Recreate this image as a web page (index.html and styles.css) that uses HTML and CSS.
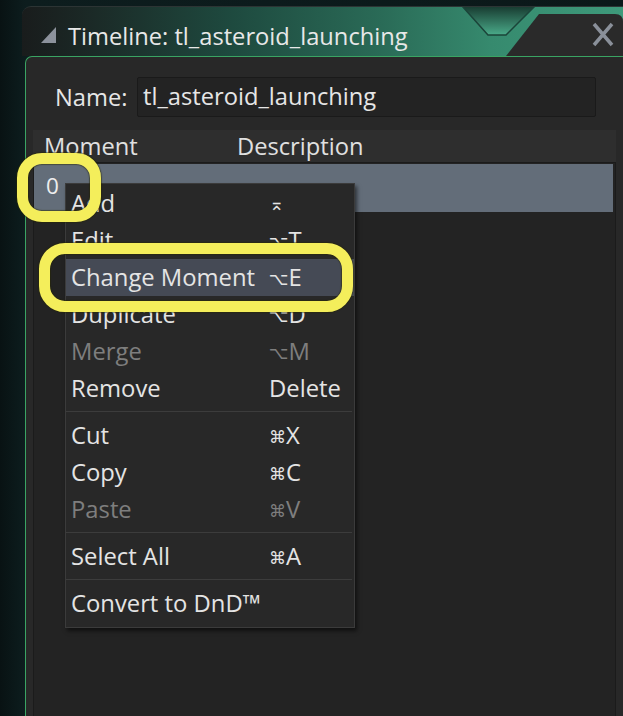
FILE: index.html
```html
<!DOCTYPE html>
<html>
<head>
<meta charset="utf-8">
<link rel="stylesheet" href="styles.css">
</head>
<body>
<div class="desktop">
  <div class="window">
    <div class="titlebar">
      <svg class="tri" width="15" height="16" viewBox="0 0 15 16"><polygon points="0,16 15,16 15,0" fill="#8c929c"/></svg>
      <div class="title">Timeline: tl_asteroid_launching</div>
      <div class="spacer"></div>
      <svg class="deco" width="170" height="50" viewBox="0 0 170 50">
        <defs>
          <linearGradient id="ng" x1="0" y1="0" x2="0" y2="1">
            <stop offset="0" stop-color="#17392f"/>
            <stop offset="1" stop-color="#4aaa89"/>
          </linearGradient>
        </defs>
        <polygon points="9,0 82,0 53,29 35,29" fill="url(#ng)" stroke="#1b4439" stroke-width="1.5"/>
        <path d="M53,50 L86,8 L162,8 Q170,8 170,16 L170,50 Z" fill="#2a2a2a"/>
        <path d="M141,18 L159,39 M159,18 L141,39" stroke="#8a909a" stroke-width="3.5"/>
      </svg>
    </div>
    <div class="panel">
      <div class="name-row">
        <span class="label">Name:</span>
        <div class="input">tl_asteroid_launching</div>
      </div>
      <div class="list">
        <div class="list-head">
          <span class="col-moment">Moment</span>
          <span class="col-desc">Description</span>
        </div>
        <div class="rows">
          <div class="row selected"><span class="moment">0</span></div>
        </div>
      </div>
    </div>
  </div>

  <div class="menu">
    <div class="item"><span>Add</span><span class="sc"><span class="mod up">⌅</span></span></div>
    <div class="item"><span>Edit</span><span class="sc"><span class="mod">⌥</span>T</span></div>
    <div class="item hl"><span>Change Moment</span><span class="sc"><span class="mod">⌥</span>E</span></div>
    <div class="item"><span>Duplicate</span><span class="sc"><span class="mod">⌥</span>D</span></div>
    <div class="item dis"><span>Merge</span><span class="sc"><span class="mod">⌥</span>M</span></div>
    <div class="item"><span>Remove</span><span class="sc">Delete</span></div>
    <div class="sep"></div>
    <div class="item"><span>Cut</span><span class="sc"><span class="mod">⌘</span>X</span></div>
    <div class="item"><span>Copy</span><span class="sc"><span class="mod">⌘</span>C</span></div>
    <div class="item dis"><span>Paste</span><span class="sc"><span class="mod">⌘</span>V</span></div>
    <div class="sep"></div>
    <div class="item"><span>Select All</span><span class="sc"><span class="mod">⌘</span>A</span></div>
    <div class="sep"></div>
    <div class="item"><span>Convert to DnD™</span><span class="sc"></span></div>
  </div>

  <div class="ring ring-zero"></div>
  <div class="ring ring-change"></div>
</div>
</body>
</html>
```
FILE: styles.css
```css
html, body {
  margin: 0;
  padding: 0;
}
body {
  width: 623px;
  height: 716px;
  overflow: hidden;
  background: #0b1718;
  font-family: "Open Sans", "Noto Sans", sans-serif;
  color: #e4e4e4;
}
.desktop {
  position: relative;
  width: 623px;
  height: 716px;
  background: linear-gradient(90deg, #081213 0%, #0d1d1e 4%, #0b1819 100%);
}
.window {
  margin-left: 22px;
  padding-top: 6px;
  height: 710px;
  display: flex;
  flex-direction: column;
}
.titlebar {
  height: 50px;
  flex: none;
  display: flex;
  align-items: center;
  border-top-left-radius: 9px;
  border-top: 1px solid #2c3434;
  box-sizing: border-box;
  background: linear-gradient(90deg, #191c1c 0%, #1b2a27 12%, #1e4a3f 35%, #2a6b57 60%, #368a6e 78%, #3e9a7b 100%);
  overflow: hidden;
}
.tri {
  margin-left: 19px;
  margin-top: 7px;
  flex: none;
}
.title {
  margin-left: 12px;
  font-size: 23.7px;
  color: #e8e8e8;
  white-space: nowrap;
  margin-top: 8px;
}
.spacer { flex: 1; }
.deco {
  flex: none;
  align-self: flex-start;
  margin-top: -1px;
}
.panel {
  flex: 1;
  margin-left: 3px;
  border-top: 1px solid #3aa463;
  border-left: 1px solid #3aa463;
  border-top-left-radius: 7px;
  background: #282828;
  display: flex;
  flex-direction: column;
}
.name-row {
  display: flex;
  align-items: center;
  padding: 20px 27px 0 29px;
  height: 40px;
}
.label {
  font-size: 23.7px;
  width: 82px;
  flex: none;
  color: #e6e6e6;
}
.input {
  flex: 1;
  height: 40px;
  box-sizing: border-box;
  background: #232323;
  border: 1px solid #1a1a1a;
  border-radius: 2px;
  font-size: 23.7px;
  line-height: 36px;
  padding-left: 5px;
  color: #e6e6e6;
}
.list {
  margin: 13px 7px 0 7px;
  flex: 1;
  display: flex;
  flex-direction: column;
}
.list-head {
  height: 32px;
  background: #2e2e2e;
  display: flex;
  align-items: center;
  font-size: 23.7px;
  color: #e0e0e0;
  line-height: 32px;
}
.col-moment { margin-left: 11px; width: 193px; }
.rows {
  flex: 1;
  background: #232323;
  border-top: 1px solid #1b1b1b;
  border-left: 1px solid #1b1b1b;
  border-right: 1px solid #1b1b1b;
  padding: 1px 2px 0 0;
}
.row {
  height: 48px;
}
.row.selected {
  background: #636d79;
}
.moment {
  display: block;
  margin-left: 12px;
  padding-top: 7px;
  font-size: 22.5px;
  line-height: 30px;
  color: #eeeeee;
}
.menu {
  position: absolute;
  left: 65px;
  top: 183px;
  width: 288px;
  background: #282828;
  border: 1px solid #3b3b3b;
  box-shadow: 2px 3px 4px rgba(0, 0, 0, 0.55);
  padding: 1px 0 5px 0;
}
.item {
  height: 37px;
  line-height: 37px;
  display: grid;
  grid-template-columns: 198px 1fr;
  padding-left: 5px;
  font-size: 23.8px;
  color: #e4e4e4;
  white-space: nowrap;
}
.item.hl {
  background: #454a55;
}
.item.dis {
  color: #7e7e7e;
}
.mod {
  font-family: "DejaVu Sans", sans-serif;
  font-size: 17px;
  margin-right: 0;
  vertical-align: 1px;
}
.mod.up {
  font-size: 18px;
  vertical-align: 5px;
}
.sep {
  height: 1px;
  background: #3c3c3c;
  margin: 4px 2px 5px 0;
}
.ring {
  position: absolute;
  border: 11px solid #f4ee5b;
  box-sizing: border-box;
  box-shadow: 0 0 1px 1px rgba(40, 40, 0, 0.5), inset 0 0 1px 1px rgba(40, 40, 0, 0.5);
}
.ring-zero {
  left: 17px;
  top: 153px;
  width: 84px;
  height: 69px;
  border-radius: 25px;
}
.ring-change {
  left: 39px;
  top: 243px;
  width: 314px;
  height: 69px;
  border-radius: 26px;
}
```
